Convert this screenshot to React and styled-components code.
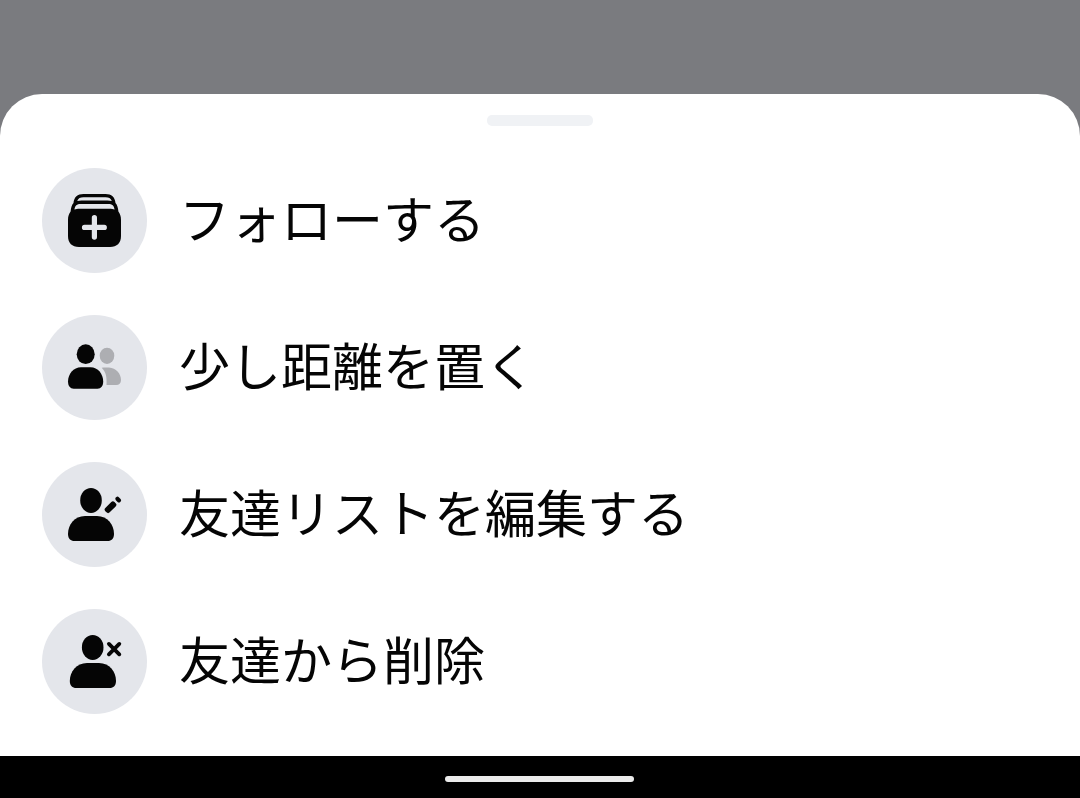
import React from "react";
import styled, { createGlobalStyle } from "styled-components";

const GlobalStyle = createGlobalStyle`
  body {
    margin: 0;
    background-color: #7a7b7f;
  }
`;

const Screen = styled.div`
  height: 798px;
  display: flex;
  flex-direction: column;
  overflow: hidden;
  background-color: #7a7b7f;
`;

const Sheet = styled.div`
  margin-top: 94px;
  flex: 1;
  display: flex;
  flex-direction: column;
  background-color: #fff;
  border-radius: 42px 42px 0 0;
`;

const Handle = styled.div`
  width: 106px;
  height: 11px;
  margin: 21px auto 42px;
  border-radius: 5px;
  background-color: #f0f2f5;
`;

const Menu = styled.div`
  display: flex;
  flex-direction: column;
  gap: 42px;
  padding-left: 42px;
`;

const Item = styled.div`
  display: flex;
  align-items: center;
  gap: 32px;
  height: 105px;
  cursor: pointer;
`;

const IconCircle = styled.div`
  width: 105px;
  height: 105px;
  flex-shrink: 0;
  border-radius: 50%;
  background-color: #e4e6eb;
  color: #050505;
`;

const Icon = styled.svg`
  display: block;
  width: 105px;
  height: 105px;
  fill: currentColor;
`;

const Label = styled.span`
  padding-bottom: 8px;
  font-family: "Noto Sans CJK JP", sans-serif;
  font-size: 51px;
  line-height: 74px;
  color: #050505;
  white-space: nowrap;
`;

const NavBar = styled.div`
  height: 42px;
  display: flex;
  justify-content: center;
  background-color: #000;
`;

const HomeBar = styled.div`
  width: 189px;
  height: 6px;
  margin: 20px 1px 0 0;
  border-radius: 3px;
  background-color: #ebebeb;
`;

const FollowIcon = () => (
  <Icon viewBox="0 0 105 105">
    <path d="M26 52C26 48 27 46 28.600 43.500C29 39.500 29.800 37 31.500 35C32 29 35.500 25.900 41.500 25.900H63.500C69.500 25.900 73 29 73.500 35C75.200 37 76 39.500 76.400 43.500C78 46 79 48 79 52V68C79 75 75 79 68 79H37C30 79 26 75 26 68Z" />
    <g fill="#e4e6eb">
      <path d="M35.200 33C36.300 30.200 38.200 29.200 41.500 29.200H63.500C66.800 29.200 68.700 30.200 69.800 33C68.500 32.700 67 32.500 65.500 32.500H39.500C38 32.500 36.500 32.700 35.200 33Z" />
      <path d="M32.400 41.600C33 37.800 34.800 36.100 38.700 36.100H66.300C70.200 36.100 72 37.800 72.600 41.600C71 40.900 69.500 40.700 67.500 40.700H37.500C35.500 40.700 34 40.900 32.400 41.600Z" />
    </g>
    <path
      d="M52.400 49.700V69.100M42.500 59.400H62.300"
      fill="none"
      stroke="#e4e6eb"
      strokeWidth="5.200"
      strokeLinecap="round"
    />
  </Icon>
);

const FriendsIcon = () => (
  <Icon viewBox="0 0 105 105">
    <g fill="#adaeb2">
      <ellipse cx="65" cy="40.800" rx="7.300" ry="8.100" />
      <path d="M59.700 52.800C62 52.300 64.500 52.300 67 52.500C74 53 79 58.500 79 65C79 68.200 77 70 74.300 70H64.500C65 62.500 64 57 59.700 52.800Z" />
    </g>
    <ellipse cx="43.700" cy="39.200" rx="9" ry="9.900" />
    <path d="M39 52.200H48.500C56 52.200 61.200 59 61.200 66.500C61.200 71 59 73.700 55.500 73.700H31.700C28.200 73.700 26 71 26 66.500C26 59 31.500 52.200 39 52.200Z" />
  </Icon>
);

const EditIcon = () => (
  <Icon viewBox="0 0 105 105">
    <ellipse cx="49" cy="38.400" rx="10.800" ry="12.500" />
    <path d="M43 54H55C65.500 54 72 62.500 72 72C72 76.500 69.500 79 65.500 79H32.500C28.500 79 26 76.500 26 72C26 62.500 32.500 54 43 54Z" />
    <rect
      x="-6.500"
      y="-3.100"
      width="13"
      height="6.200"
      rx="2.300"
      transform="translate(68.500 45.200) rotate(-45)"
    />
    <rect
      x="-2.100"
      y="-3.100"
      width="4.200"
      height="6.200"
      rx="1.900"
      transform="translate(76.200 37.600) rotate(-45)"
    />
  </Icon>
);

const RemoveIcon = () => (
  <Icon viewBox="0 0 105 105">
    <ellipse cx="50.700" cy="38.400" rx="10.800" ry="12.500" />
    <path d="M45 54H57C67.500 54 74 62.500 74 72C74 76.500 71.500 79 67.500 79H34.300C30.300 79 27.800 76.500 27.800 72C27.800 62.500 34.500 54 45 54Z" />
    <path
      d="M66.900 34.900L77.300 45.300M77.300 34.900L66.900 45.300"
      fill="none"
      stroke="currentColor"
      strokeWidth="3.800"
      strokeLinecap="round"
    />
  </Icon>
);

const items = [
  { label: "フォローする", icon: <FollowIcon /> },
  { label: "少し距離を置く", icon: <FriendsIcon /> },
  { label: "友達リストを編集する", icon: <EditIcon /> },
  { label: "友達から削除", icon: <RemoveIcon /> },
];

const App = () => {
  return (
    <>
      <GlobalStyle />
      <Screen>
        <Sheet>
          <Handle />
          <Menu>
            {items.map((item) => (
              <Item key={item.label}>
                <IconCircle>{item.icon}</IconCircle>
                <Label>{item.label}</Label>
              </Item>
            ))}
          </Menu>
        </Sheet>
        <NavBar>
          <HomeBar />
        </NavBar>
      </Screen>
    </>
  );
};

export default App;
